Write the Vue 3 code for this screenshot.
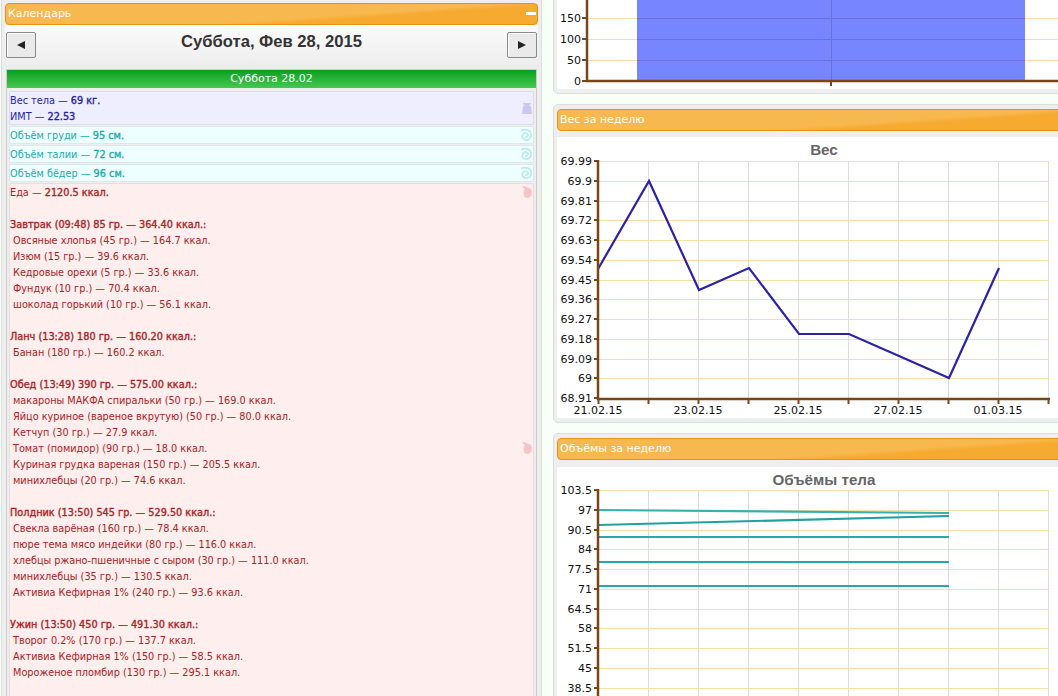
<script setup>
const food = [
  { label: 'Завтрак (09:48) 85 гр. — 364.40 ккал.:', items: ['Овсяные хлопья (45 гр.) — 164.7 ккал.', 'Изюм (15 гр.) — 39.6 ккал.', 'Кедровые орехи (5 гр.) — 33.6 ккал.', 'Фундук (10 гр.) — 70.4 ккал.', 'шоколад горький (10 гр.) — 56.1 ккал.'] },
  { label: 'Ланч (13:28) 180 гр. — 160.20 ккал.:', items: ['Банан (180 гр.) — 160.2 ккал.'] },
  { label: 'Обед (13:49) 390 гр. — 575.00 ккал.:', items: ['макароны МАКФА спиральки (50 гр.) — 169.0 ккал.', 'Яйцо куриное (вареное вкрутую) (50 гр.) — 80.0 ккал.', 'Кетчуп (30 гр.) — 27.9 ккал.', 'Томат (помидор) (90 гр.) — 18.0 ккал.', 'Куриная грудка вареная (150 гр.) — 205.5 ккал.', 'минихлебцы (20 гр.) — 74.6 ккал.'] },
  { label: 'Полдник (13:50) 545 гр. — 529.50 ккал.:', items: ['Свекла варёная (160 гр.) — 78.4 ккал.', 'пюре тема мясо индейки (80 гр.) — 116.0 ккал.', 'хлебцы ржано-пшеничные с сыром (30 гр.) — 111.0 ккал.', 'минихлебцы (35 гр.) — 130.5 ккал.', 'Активиа Кефирная 1% (240 гр.) — 93.6 ккал.'] },
  { label: 'Ужин (13:50) 450 гр. — 491.30 ккал.:', items: ['Творог 0.2% (170 гр.) — 137.7 ккал.', 'Активиа Кефирная 1% (150 гр.) — 58.5 ккал.', 'Мороженое пломбир (130 гр.) — 295.1 ккал.'] }
]

const volumes = ['Объём груди — 95 см.', 'Объём талии — 72 см.', 'Объём бёдер — 96 см.']

const xs = [648, 698, 748, 798, 848, 898, 948, 998, 1048]

const weightTicks = ['69.99', '69.9', '69.81', '69.72', '69.63', '69.54', '69.45', '69.36', '69.27', '69.18', '69.09', '69', '68.91']
  .map((label, i) => ({ label, y: Math.round(161 + i * 19.75) }))
const volumeTicks = ['103.5', '97', '90.5', '84', '77.5', '71', '64.5', '58', '51.5', '45', '38.5']
  .map((label, i) => ({ label, y: Math.round(490 + i * 19.75) }))

const dates = [
  { label: '21.02.15', x: 598 },
  { label: '23.02.15', x: 698 },
  { label: '25.02.15', x: 798 },
  { label: '27.02.15', x: 898 },
  { label: '01.03.15', x: 998 }
]

const weightLine = '598,269 649,181 699,290 749,268 799,334 849,334 899,356 949,378 999,268'
const volumeLines = [
  { pts: '598,510 949,513', color: '#38b0ae' },
  { pts: '598,525 949,516', color: '#22a09e' },
  { pts: '598,537 949,537', color: '#2aa8a6' },
  { pts: '598,562 949,562', color: '#2aa8a6' },
  { pts: '598,586 949,586', color: '#2aa8a6' }
]
</script>

<template>
  <div class="page">
    <!-- calendar -->
    <section class="calendar-panel">
      <div class="bar">
        <span>Календарь</span>
        <span class="minus" />
      </div>

      <div class="toolbar">
        <button class="nav"><span class="arrow left" /></button>
        <h2 class="date">Суббота, Фев 28, 2015</h2>
        <button class="nav"><span class="arrow right" /></button>
      </div>

      <div class="day">
        <div class="day-head">Суббота 28.02</div>
        <div class="day-body">
          <div class="row weight">
            <div>
              <div class="line">Вес тела — <b>69 кг.</b></div>
              <div class="line">ИМТ — <b>22.53</b></div>
            </div>
            <svg class="icon" width="10" height="11" viewBox="0 0 10 11">
              <path d="M1 0h8v1.500H7.500V3H9l1 8H0l1-8h1.500V1.500H1z" fill="#c9c9f0" />
            </svg>
          </div>

          <div class="row volume" v-for="v in volumes" :key="v">
            <div class="line">{{ v.split('— ')[0] }}— <b>{{ v.split('— ')[1] }}</b></div>
            <svg class="icon" width="12" height="12" viewBox="0 0 12 12">
              <path d="M1 1.500C4 .5 8 .5 10 2.500c2 2.200 1.500 5.800-.7 7.500-2.200 1.600-5.300 1.300-6.500-.7C1.700 7.500 2.500 4.700 4.800 4.200c1.900-.4 3.400 1 3 2.600-.3 1.200-1.800 1.700-2.600.8" fill="none" stroke="#bfeaea" stroke-width="1.800" />
            </svg>
          </div>

          <div class="row meal">
            <div class="meal-list">
              <div class="entry">
                <div class="line">Еда — <b>2120.5 ккал.</b></div>
                <svg class="icon" width="10" height="12" viewBox="0 0 10 12">
                  <path d="M0 0h3l2 1.500c3 0 5 1.700 5 4.700C10 9.500 8 12 5.500 12 3 12 1.500 10 1.500 7c0-1.500.5-2.800 1.500-3.700z" fill="#f1c6c6" />
                </svg>
              </div>
              <div class="line">&nbsp;</div>
              <template v-for="group in food" :key="group.label">
                <div class="line"><b>{{ group.label }}</b></div>
                <div class="entry" v-for="item in group.items" :key="item">
                  <div class="line item">{{ item }}</div>
                  <svg v-if="item.startsWith('Томат')" class="icon" width="10" height="12" viewBox="0 0 10 12">
                    <path d="M0 0h3l2 1.500c3 0 5 1.700 5 4.700C10 9.500 8 12 5.500 12 3 12 1.500 10 1.500 7c0-1.500.5-2.800 1.500-3.700z" fill="#f1c6c6" />
                  </svg>
                </div>
                <div class="line">&nbsp;</div>
              </template>
            </div>
          </div>
        </div>
      </div>
    </section>

    <!-- charts -->
    <div class="charts">
      <section class="chart-panel clipped">
        <div class="chart-box">
          <svg width="534" height="89" viewBox="557 0 534 89">
            <line v-for="y in [18, 39, 60]" :key="y" x1="587" x2="1091" :y1="y + 0.5" :y2="y + 0.5" class="grid-h" />
            <rect x="637" y="0" width="388" height="81" fill="#7785ff" />
            <line v-for="y in [18, 39, 60]" :key="'b' + y" x1="637" x2="1025" :y1="y + 0.5" :y2="y + 0.5" stroke="#6672d8" />
            <line x1="831.500" x2="831.500" y1="0" y2="81" stroke="#6672d8" />
            <line x1="587" x2="587" y1="0" y2="82" class="axis" />
            <line x1="586" x2="1058" y1="81" y2="81" class="axis" />
            <line x1="831" x2="831" y1="81" y2="86" class="axis thin" />
            <template v-for="t in [{ l: '150', y: 18 }, { l: '100', y: 39 }, { l: '50', y: 60 }, { l: '0', y: 81 }]" :key="t.l">
              <line x1="582" x2="587" :y1="t.y" :y2="t.y" class="axis thin" />
              <text x="581" :y="t.y + 4" text-anchor="end" class="tick">{{ t.l }}</text>
            </template>
          </svg>
        </div>
      </section>

      <section class="chart-panel">
        <div class="bar"><span>Вес за неделю</span></div>
        <div class="chart-box">
          <div class="chart-title">Вес</div>
          <svg width="534" height="260" viewBox="557 158 534 260">
            <line v-for="x in xs" :key="x" :x1="x + 0.5" :x2="x + 0.5" y1="161" y2="398" class="grid-v" />
            <line v-for="t in weightTicks" :key="t.label" x1="598" x2="1049" :y1="t.y + 0.5" :y2="t.y + 0.5" class="grid-h" />
            <polyline :points="weightLine" fill="none" stroke="#2a22aa" stroke-width="2.200" />
            <line x1="598" x2="598" y1="160" y2="400" class="axis" />
            <line x1="597" x2="1050" y1="399" y2="399" class="axis" />
            <line v-for="x in [598, ...xs]" :key="'t' + x" :x1="x + 0.5" :x2="x + 0.5" y1="398" y2="404" class="axis thin" />
            <template v-for="t in weightTicks" :key="'l' + t.label">
              <line x1="594" x2="598" :y1="t.y" :y2="t.y" class="axis thin" />
              <text x="592" :y="t.y + 4" text-anchor="end" class="tick">{{ t.label }}</text>
            </template>
            <text v-for="d in dates" :key="d.label" :x="d.x" y="414" text-anchor="middle" class="tick">{{ d.label }}</text>
          </svg>
        </div>
      </section>

      <section class="chart-panel">
        <div class="bar"><span>Объёмы за неделю</span></div>
        <div class="chart-box">
          <div class="chart-title">Объёмы тела</div>
          <svg width="534" height="230" viewBox="557 488 534 230">
            <line v-for="x in xs" :key="x" :x1="x + 0.5" :x2="x + 0.5" y1="490" y2="718" class="grid-v" />
            <line v-for="t in volumeTicks" :key="t.label" x1="598" x2="1049" :y1="t.y + 0.5" :y2="t.y + 0.5" class="grid-h" />
            <polyline v-for="l in volumeLines" :key="l.pts" :points="l.pts" fill="none" :stroke="l.color" stroke-width="2.200" />
            <line x1="598" x2="598" y1="489" y2="718" class="axis" />
            <template v-for="t in volumeTicks" :key="'l' + t.label">
              <line x1="594" x2="598" :y1="t.y" :y2="t.y" class="axis thin" />
              <text x="592" :y="t.y + 4" text-anchor="end" class="tick">{{ t.label }}</text>
            </template>
          </svg>
        </div>
      </section>
    </div>
  </div>
</template>

<style>
html, body {
  margin: 0;
  background: #f8fff8;
}
</style>

<style scoped>
.page {
  display: flex;
  width: 1058px;
  height: 696px;
  overflow: hidden;
  background: #f8fff8;
}

/* BARS */
.bar {
  display: flex;
  justify-content: space-between;
  align-items: center;
  box-sizing: border-box;
  height: 22px;
  padding: 0 0 2px 2px;
  border: 1px solid #e8920f;
  border-radius: 4px;
  background: linear-gradient(176deg, #f8b850 0%, #f8b850 60%, #f6aa30 68%, #f6aa30 100%);
  color: #fff;
  font: 11px "DejaVu Sans", sans-serif;
}

.minus {
  width: 10px;
  height: 3px;
  margin-right: 1px;
  background: #fff;
}

/* CALENDAR */
.calendar-panel {
  flex: none;
  box-sizing: border-box;
  width: 541px;
  margin-left: 1px;
  padding: 3px 3px 0;
  border: 1px solid #ddd;
  border-width: 0 1px;
  background: #eee;
}

.toolbar {
  display: flex;
  justify-content: space-between;
  height: 44px;
  padding: 7px 1px 0;
  box-sizing: border-box;
  background: linear-gradient(#fbfbfb, #ececec);
}

.nav {
  display: flex;
  align-items: center;
  justify-content: center;
  width: 30px;
  height: 26px;
  padding: 0;
  border: 1px solid #888;
  border-radius: 2px;
  background: #eaeaea;
  box-shadow: inset 1px 1px 0 #fff;
}

.arrow {
  width: 0;
  height: 0;
  border-top: 4px solid transparent;
  border-bottom: 4px solid transparent;
}

.arrow.left { border-right: 8px solid #222; }
.arrow.right { border-left: 8px solid #222; }

.date {
  margin: 1px 0 0;
  color: #333;
  font: bold 16.600px "Liberation Sans", Arial, sans-serif;
  line-height: 18px;
}

.day {
  margin: 0 1px;
  border: 1px solid #ccc;
  border-bottom: 0;
  background: #eee;
  font-family: "DejaVu Sans Condensed", "DejaVu Sans", sans-serif;
  font-size: 10.800px;
  font-stretch: condensed;
}

.day b {
  font-weight: normal;
  -webkit-text-stroke: 0.35px currentColor;
}

.day-head {
  height: 18px;
  background: linear-gradient(#0aa020, #46c850);
  color: #fff;
  font: 11px/18px "DejaVu Sans", sans-serif;
  text-align: center;
}

.day-body {
  display: flex;
  flex-direction: column;
  gap: 1px;
  padding: 3px 2px;
}

.row {
  display: flex;
  justify-content: space-between;
  align-items: center;
  border: 1px solid;
  border-radius: 2px;
}

.line {
  height: 16px;
  line-height: 18px;
  white-space: nowrap;
}

.item {
  padding-left: 3px;
}

.icon {
  flex: none;
  margin-right: 1px;
}

.weight { background: #eeeeff; border-color: #dddde8; color: #2222aa; }
.volume { background: #eeffff; border-color: #dde8e8; color: #22aaaa; }
.meal { background: #ffeeee; border-color: #e8dddd; color: #aa2222; align-items: flex-start; }

.meal-list { flex: 1; }

.entry {
  display: flex;
  justify-content: space-between;
  align-items: center;
}

/* CHARTS */
.charts {
  flex: none;
  display: flex;
  flex-direction: column;
  gap: 10px;
  width: 542px;
  margin-left: 11px;
}

.chart-panel {
  box-sizing: border-box;
  padding: 4px 3px 4px;
  border: 1px solid #ddd;
  border-radius: 5px;
  background: #eee;
}

.chart-panel.clipped {
  height: 95px;
  padding-top: 0;
  border-top: 0;
  border-top-left-radius: 0;
}

.chart-box {
  width: 534px;
  background: #fff;
}

.chart-panel .bar + .chart-box {
  margin-top: 6px;
}

.chart-panel:last-child .bar + .chart-box {
  margin-top: 7px;
}

.chart-box svg {
  display: block;
  overflow: visible;
}

.chart-title {
  height: 21px;
  color: #666;
  font: bold 15.200px/25px "Liberation Sans", Arial, sans-serif;
  text-align: center;
}

.grid-h { stroke: #f5dfa5; stroke-width: 1; }
.grid-v { stroke: #dddddd; stroke-width: 1; }
.axis { stroke: #7a4518; stroke-width: 2.500; }
.axis.thin { stroke-width: 2; }
.tick { fill: #111; font: 11px "DejaVu Sans", sans-serif; }
</style>
